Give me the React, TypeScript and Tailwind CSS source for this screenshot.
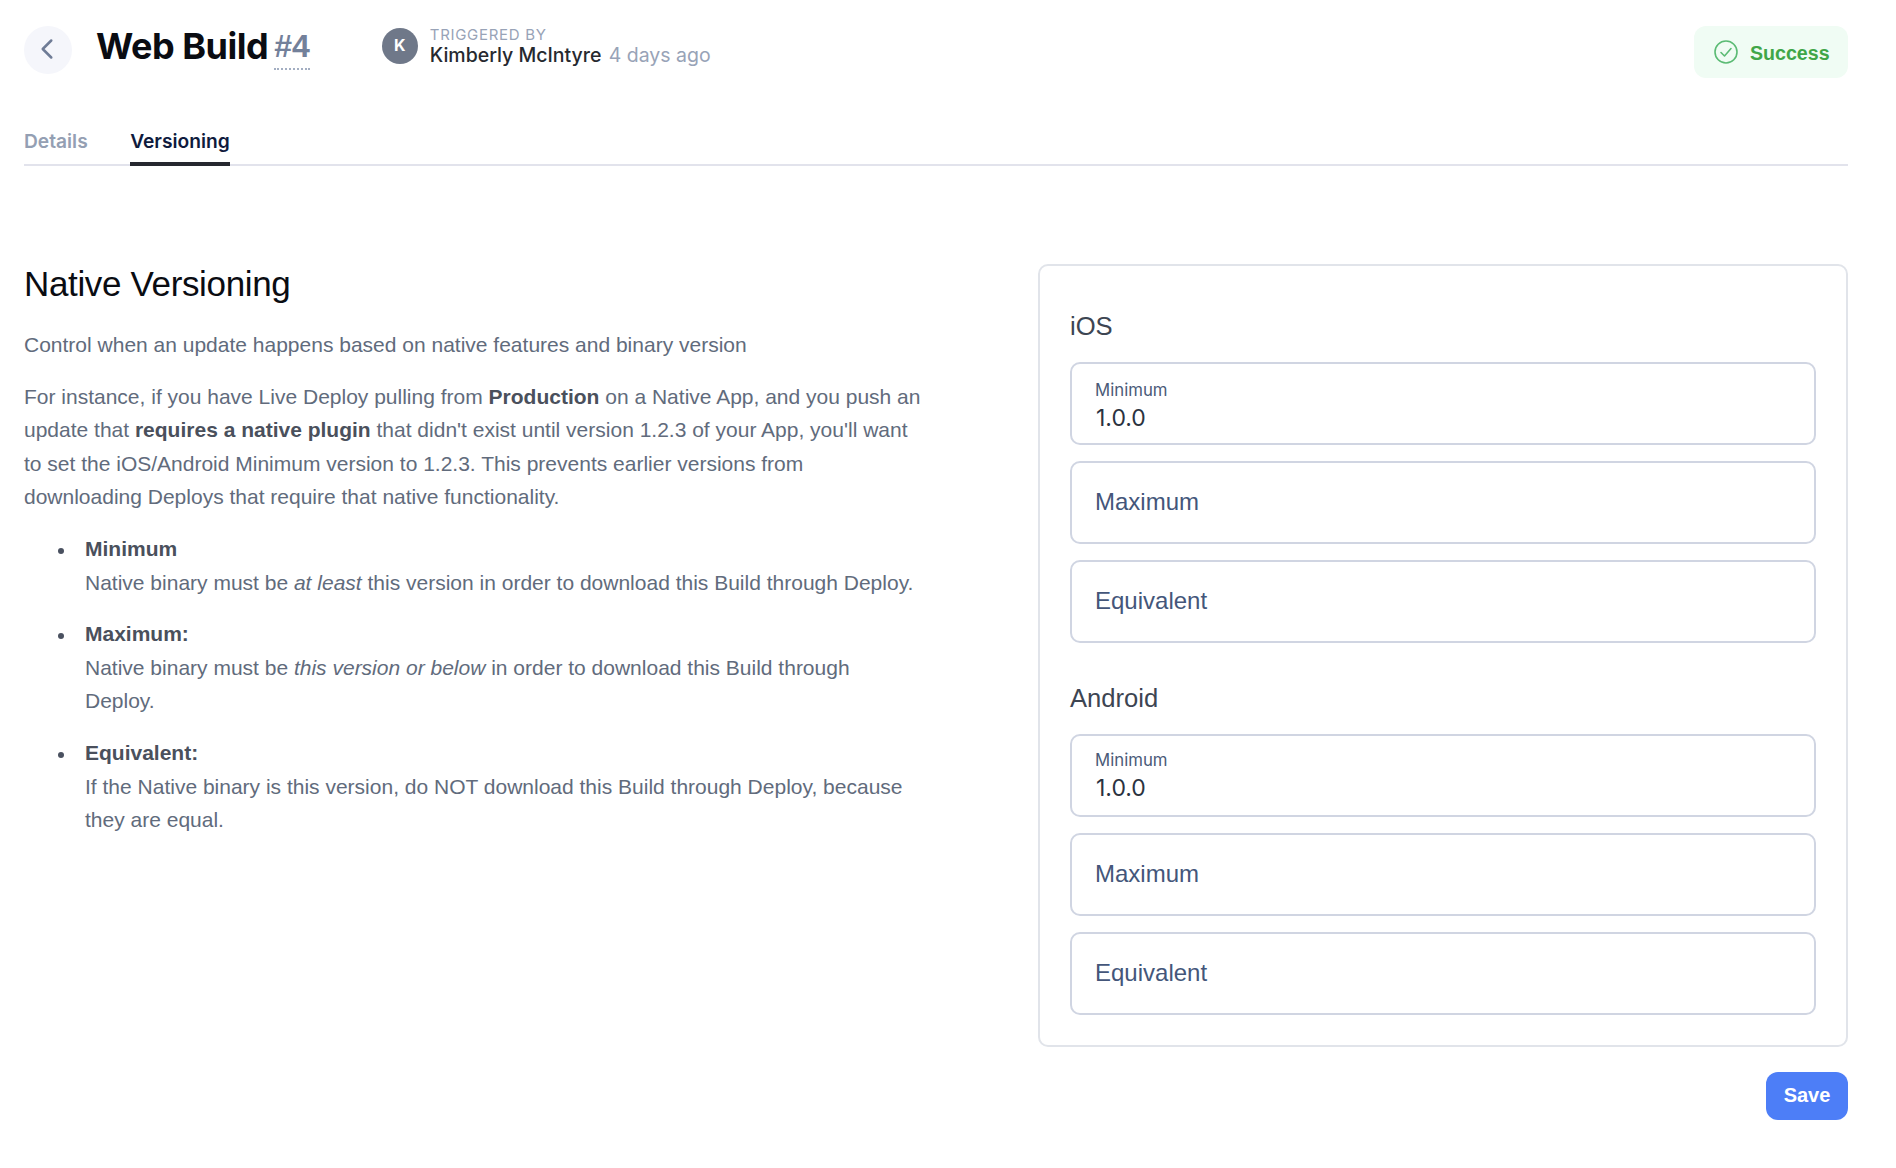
import { ChevronLeft } from 'lucide-react';

const fieldClass = 'h-[83px] rounded-[10px] border-2 border-[#d0d5e2] bg-white px-[23px]';

function Field({ label, value, top }: { label: string; value?: string; top?: string }) {
  if (value) {
    return (
      <div className={`${fieldClass} ${top} font-["Inter",sans-serif]`}>
        <div className="text-[16.8px] leading-[22px] text-[#4a5a78]">{label}</div>
        <div className="text-[23px] leading-[30px] mt-0.5 pl-px text-[#2a3240]">{value}</div>
      </div>
    );
  }
  return (
    <div className={`${fieldClass} flex items-center pb-[2px]`}>
      <div className="text-[24px] leading-[30px] text-[#44567a]">{label}</div>
    </div>
  );
}

function PlatformFields({ name, top }: { name: string; top: string }) {
  return (
    <div>
      <h3 className="pt-[10px] text-[25.6px] leading-[40px] mb-4 text-[#3d4552]">{name}</h3>
      <div className="flex flex-col gap-4">
        <Field label="Minimum" value="1.0.0" top={top} />
        <Field label="Maximum" />
        <Field label="Equivalent" />
      </div>
    </div>
  );
}

function Bullet() {
  return <span className="shrink-0 w-[6px] h-[6px] rounded-full bg-[#4a5160] ml-[34px] mr-[21px] mt-[16px]" />;
}

export default function App() {
  return (
    <div className='min-h-[1168px] bg-white pl-6 pr-12 font-["Liberation_Sans",Arial,sans-serif] text-[21px] leading-[33.6px] text-[#616b7c]'>
      <header className="flex items-start pt-[26px] h-[104px]">
        <button className="w-12 h-12 pr-[3px] pb-[3px] rounded-full bg-[#f5f6fb] flex items-center justify-center text-[#6f7c96]">
          <ChevronLeft size={34} strokeWidth={1.8} />
        </button>
        <h1 className='ml-6 -mt-px text-[36px] leading-[42px] font-bold tracking-[-0.5px] text-[#0a0c12] font-["Inter",sans-serif]'>Web Build</h1>
        <span className="ml-[6px] mt-px text-[32px] leading-[38px] font-bold text-[#73809a] border-b-2 border-dotted border-[#a3aec2] pb-[3px]">#4</span>
        <div className='ml-[72px] mt-0.5 w-9 h-9 rounded-full bg-[#6f7889] text-white text-[16px] font-bold flex items-center justify-center font-["Inter",sans-serif]'>K</div>
        <div className='ml-3 font-["Inter",sans-serif]'>
          <div className="text-[15px] leading-[16px] mt-px tracking-[0.7px] text-[#98a3b7]">TRIGGERED BY</div>
          <div className="text-[19.5px] leading-[24px] font-medium text-[#26292f]">
            Kimberly McIntyre <span className="ml-[2px] font-normal text-[#98a3b7]">4 days ago</span>
          </div>
        </div>
        <div className="ml-auto h-[52px] w-[154px] rounded-[12px] bg-[#f0fcf4] flex items-center pl-5 gap-3 text-[#3fa648] text-[19.6px] font-bold">
          <svg width="24" height="24" viewBox="0 0 24 24" fill="none" stroke="#5bbb74" strokeWidth="1.6" strokeLinecap="round" strokeLinejoin="round">
            <circle cx="12" cy="12" r="11" />
            <path d="M7 12.5l3.5 3.5L17 8.5" />
          </svg>
          <span className="mt-1">Success</span>
        </div>
      </header>

      <nav className='flex gap-[42.5px] h-[62px] border-b-2 border-[#e2e3ec] text-[19.2px] font-semibold font-["Inter",sans-serif]'>
        <div className="pt-[21px] text-[#949fb3]">Details</div>
        <div className="pt-[21px] h-[62px] border-b-4 border-[#26282f] text-[#0f1b3d]">Versioning</div>
      </nav>

      <main className="flex mt-[98px]">
        <div className="w-[898px] mr-[116px] shrink-0">
          <h2 className="text-[35px] leading-[44px] -mt-0.5 tracking-[-0.35px] mb-[22px] text-[#0a0c12]">Native Versioning</h2>
          <p className="mb-[18px]">Control when an update happens based on native features and binary version</p>
          <p className="mb-[18px]">
            For instance, if you have Live Deploy pulling from <strong className="text-[#4a505c]">Production</strong> on a Native App, and you push an update that <strong className="text-[#4a505c]">requires a native plugin</strong> that didn't exist until version 1.2.3 of your App, you'll want to set the iOS/Android Minimum version to 1.2.3. This prevents earlier versions from downloading Deploys that require that native functionality.
          </p>
          <ul className="flex flex-col gap-[18px]">
            <li className="flex">
              <Bullet />
              <div>
                <strong className="block text-[#4a505c]">Minimum</strong>
                Native binary must be <em>at least</em> this version in order to download this Build through Deploy.
              </div>
            </li>
            <li className="flex">
              <Bullet />
              <div>
                <strong className="block text-[#4a505c]">Maximum:</strong>
                Native binary must be <em>this version or below</em> in order to download this Build through Deploy.
              </div>
            </li>
            <li className="flex">
              <Bullet />
              <div>
                <strong className="block text-[#4a505c]">Equivalent:</strong>
                If the Native binary is this version, do NOT download this Build through Deploy, because they are equal.
              </div>
            </li>
          </ul>
        </div>

        <div className="flex-1 flex flex-col items-end">
          <div className="w-full rounded-[10px] border-2 border-[#e1e4ea] p-[30px] flex flex-col gap-[25px]">
            <PlatformFields name="iOS" top="pt-[15px]" />
            <PlatformFields name="Android" top="pt-[13px]" />
          </div>
          <button className="mt-[25px] w-[82px] h-12 rounded-[12px] bg-[#4d7ef7] text-white text-[20px] font-bold">Save</button>
        </div>
      </main>
    </div>
  );
}
